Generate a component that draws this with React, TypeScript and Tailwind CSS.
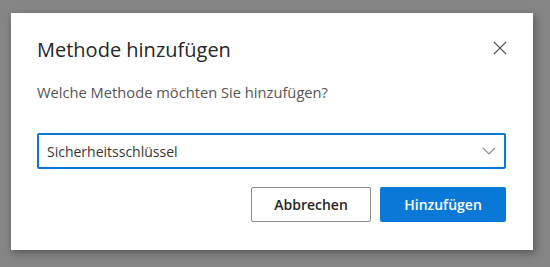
export default function App() {
  return (
    <div className="w-[550px] h-[267px] bg-[#858585] pt-[13px] pl-[11px] font-['Open_Sans','Noto_Sans',sans-serif]">
      <div className="w-[522px] h-[237px] bg-white shadow-[2px_3px_8px_rgba(0,0,0,0.35)] flex flex-col pl-[26px] pr-[27px]">
        <div className="flex items-start justify-between pt-[23px]">
          <h1 className="text-[20px] leading-[28px] text-[#262626]">Methode hinzufügen</h1>
          <button className="mt-[5px] mr-[-1px] text-[#555]">
            <svg width="14" height="14" viewBox="0 0 14 14" fill="none" stroke="currentColor" strokeWidth="1.1">
              <path d="M1 1L13 13M13 1L1 13" />
            </svg>
          </button>
        </div>
        <p className="mt-[18px] text-[14.7px] leading-[20px] text-[#555]">Welche Methode möchten Sie hinzufügen?</p>
        <div className="mt-[31px] h-[36px] border-2 border-[#0a78d7] rounded-[2px] flex items-center justify-between pl-[8px] pr-[8px]">
          <span className="text-[14px] text-[#333]">Sicherheitsschlüssel</span>
          <svg width="14" height="8" viewBox="0 0 14 8" fill="none" stroke="#8a8a8a" strokeWidth="1.1">
            <path d="M1 1L7 7L13 1" />
          </svg>
        </div>
        <div className="mt-[18px] flex justify-end gap-[9px]">
          <button className="w-[120px] h-[35px] border border-[#8a8a8a] rounded-[2px] text-[14px] font-semibold text-[#262626]">
            Abbrechen
          </button>
          <button className="w-[126px] h-[35px] bg-[#0a78d7] rounded-[2px] text-[14px] font-semibold text-white">
            Hinzufügen
          </button>
        </div>
      </div>
    </div>
  );
}
